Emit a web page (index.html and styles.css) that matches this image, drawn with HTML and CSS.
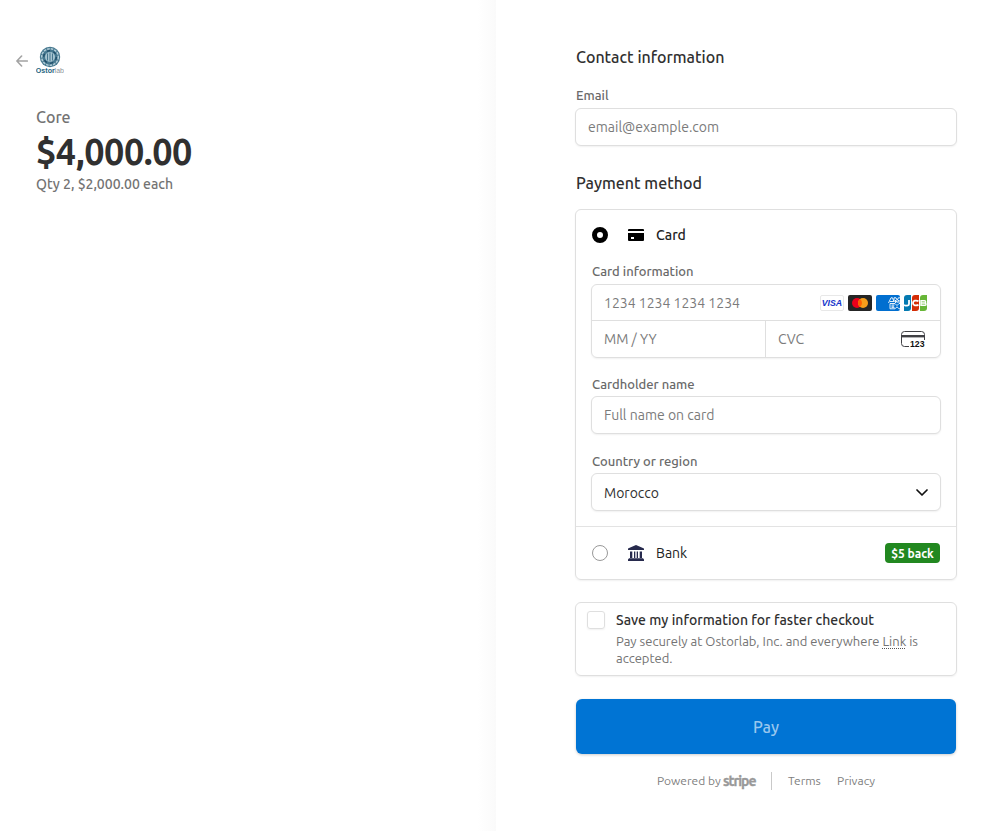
FILE: index.html
```html
<!DOCTYPE html>
<html lang="en">
<head>
<meta charset="utf-8">
<title>Checkout</title>
<link rel="stylesheet" href="styles.css">
</head>
<body>
<div class="page">
  <aside class="summary">
    <header class="brand">
      <svg class="back" width="12" height="12" viewBox="0 0 12 12" fill="none" stroke="#a3a3a3" stroke-width="1.6" stroke-linecap="round" stroke-linejoin="round"><path d="M5.6 1 .9 6l4.7 5M1 6h10.3"/></svg>
      <svg class="logo" width="28" height="28" viewBox="0 0 28 28">
        <circle cx="14" cy="11" r="10.2" fill="#46788f"/>
        <circle cx="14" cy="11" r="8.3" fill="none" stroke="#b3cdd8" stroke-width="1.5" stroke-dasharray="2.6 1"/>
        <circle cx="14" cy="11" r="6.3" fill="none" stroke="#1d4a66" stroke-width="1.3" stroke-dasharray="3 3.5"/>
        <circle cx="14" cy="11" r="5" fill="#a6c4d0"/>
        <path d="M11.500 7.500v7M14 6.500v9M16.500 7.500v7" stroke="#47778f" stroke-width="1"/>
        <text x="-.2" y="27" class="logo-name" textLength="19" lengthAdjust="spacingAndGlyphs">Ostor</text>
        <text x="18.6" y="27" class="logo-name logo-tail" textLength="9.4" lengthAdjust="spacingAndGlyphs">lab</text>
      </svg>
    </header>
    <div class="product">Core</div>
    <div class="amount">$4,000.00</div>
    <div class="quantity">Qty 2, $2,000.00 each</div>
  </aside>

  <main class="payment">
    <h2 class="heading heading-contact">Contact information</h2>
    <div class="label label-email">Email</div>
    <div class="field field-email">email@example.com</div>
    <h2 class="heading heading-method">Payment method</h2>

    <section class="methods">
      <div class="card-form">
        <div class="method">
          <span class="radio radio-on"></span>
          <svg class="method-icon" width="16" height="16" viewBox="0 0 16 16"><path d="M1 2h14a1 1 0 0 1 1 1v1H0V3a1 1 0 0 1 1-1zM0 6h16v7a1 1 0 0 1-1 1H1a1 1 0 0 1-1-1zm3 4v2h3v-2z" fill-rule="evenodd"/></svg>
          <span class="method-name name-card">Card</span>
        </div>
        <div class="label label-card">Card information</div>
        <div class="card-fields">
          <div class="card-number"><span class="digits">1234 1234 1234 1234</span>
            <span class="networks">
              <svg width="24" height="16" viewBox="0 0 24 16"><rect x=".5" y=".5" width="23" height="15" rx="1.5" fill="#fff" stroke="#e8e8e8"/><text x="1.7" y="11.2" class="visa" textLength="20.5" lengthAdjust="spacingAndGlyphs">VISA</text></svg>
              <svg width="24" height="16" viewBox="0 0 24 16"><rect width="24" height="16" rx="2" fill="#252525"/><circle cx="9" cy="8" r="5" fill="#eb001b"/><circle cx="15" cy="8" r="5" fill="#f79e1b"/><path d="M12 4a5 5 0 0 1 0 8 5 5 0 0 1 0-8z" fill="#ff5f00"/></svg>
              <svg width="24" height="16" viewBox="0 0 24 16"><rect width="24" height="16" rx="2" fill="#016fd0"/><g fill="none" stroke="#fff" stroke-width=".9"><path d="M12.5 8 15 2.800h1.500L18 7V2.800h2l1.200 2.500 1.200-2.500h1.600M14 6.500h3.500M19.500 8V5l1.700 2.500L23 5v3M14 8.500h5l2 2 2-2h1M14 8.500v5.300h5l2-2 2 2h1M15.500 10h3M15.500 11.200h2.500M15.500 12.400h3"/></g></svg>
              <svg width="24" height="16" viewBox="0 0 24 16"><path d="M3 0h4v13a3 3 0 0 1-3 3H0V3a3 3 0 0 1 3-3z" fill="#047ab1"/><path d="M11 0h4v13a3 3 0 0 1-3 3H8V3a3 3 0 0 1 3-3z" fill="#d42d06"/><path d="M19 0h4v13a3 3 0 0 1-3 3h-4V3a3 3 0 0 1 3-3z" fill="#67b637"/><g fill="none" stroke="#fff" stroke-width="1.8"><path d="M5 5v4c0 2-3 2-5 1.100M14.500 6.100c-2.500-1-5.500-.6-5.500 1.900s3 2.900 5.500 1.900"/><path d="M17 5.800h3.500c1.600 0 1.600 2.200 0 2.200H17h3.800c1.700 0 1.700 2.300 0 2.300H17z" stroke-width="1.4"/></g></svg>
            </span>
          </div>
          <div class="card-row">
            <div class="expiry">MM / YY</div>
            <div class="cvc"><span class="cvc-text">CVC</span>
              <svg class="cvc-icon" width="24" height="18" viewBox="0 0 24 18"><path d="M8 15.500H3.500a3 3 0 0 1-3-3v-9a3 3 0 0 1 3-3h17a3 3 0 0 1 3 3V9" fill="none" stroke="#404044"/><path d="M1 4h22v2.400H1z" fill="#404044"/><text x="9" y="16" class="cvc-digits" textLength="14.5" lengthAdjust="spacingAndGlyphs">123</text></svg>
            </div>
          </div>
        </div>
        <div class="label label-holder">Cardholder name</div>
        <div class="field field-holder">Full name on card</div>
        <div class="label label-country">Country or region</div>
        <div class="field field-country"><span class="country">Morocco</span>
          <svg class="chevron" width="12" height="12" viewBox="0 0 12 12" fill="none" stroke="#111" stroke-width="1.7" stroke-linecap="round" stroke-linejoin="round"><path d="m1 4 5 5 5-5"/></svg>
        </div>
      </div>
      <div class="method bank">
        <span class="radio"></span>
        <svg class="method-icon" width="16" height="16" viewBox="0 0 16 16" fill="#272a4d"><path d="M8 0l7.500 3.200a.8.8 0 0 1 .5.700V5H0V3.900c0-.3.200-.6.500-.7zM2 6.500h2.300V13H2zm4 0h1.300V13H6zm2.700 0H10V13H8.700zm3 0H14V13h-2.300zM1 13.200h14l1 1.300V16H0v-1.500z"/></svg>
        <span class="method-name name-bank">Bank</span>
        <span class="badge">$5 back</span>
      </div>
    </section>

    <section class="save">
      <span class="checkbox"></span>
      <div>
        <div class="save-title">Save my information for faster checkout</div>
        <div class="save-text"><div class="save-line">Pay securely at Ostorlab, Inc. and everywhere <span class="link">Link</span> is</div><div class="save-end">accepted.</div></div>
      </div>
    </section>

    <button class="pay">Pay</button>
    <footer class="footer">
      <span class="powered">Powered by</span><b class="stripe">stripe</b>
      <i class="rule"></i>
      <span class="terms">Terms</span><span class="privacy">Privacy</span>
    </footer>
  </main>
</div>
</body>
</html>
```
FILE: styles.css
```css
* { box-sizing: border-box; }
body {
  margin: 0;
  background: #fff;
  color: #303030;
  font-family: Ubuntu, "Noto Sans", "Open Sans", sans-serif;
  font-size: 14px;
  white-space: nowrap;
}
svg { display: block; flex: none; }
.page { display: flex; height: 831px; overflow: hidden; }

.summary {
  width: 496px;
  padding: 46px 0 0 36px;
  background: linear-gradient(to right, #fff 478px, #fafafa 496px);
}
.brand { display: flex; align-items: center; gap: 8px; height: 28px; margin-left: -20px; }
.back { margin-top: 2px; }
.logo-name { font: bold 7.5px "Liberation Sans", sans-serif; fill: #286580; }
.logo-tail { font-weight: 400; fill: #8c9499; }
.product { height: 22px; margin-top: 32px; font-size: 16px; font-weight: 500; line-height: 22px; color: #737373; }
.amount { height: 44px; margin-top: 2px; font-size: 36px; font-weight: 600; line-height: 44px; letter-spacing: -.43px; }
.quantity { height: 20px; font-weight: 500; line-height: 20px; color: #737373; }

.payment { width: 382px; margin-left: 79px; padding-top: 47px; }
.heading { height: 20px; margin: 0 0 0 1px; font-size: 16px; font-weight: 500; line-height: 20px; }
.heading-method { margin-top: 27px; }
.label { height: 16px; margin-left: 1px; font-size: 13px; font-weight: 500; line-height: 16px; color: #6a6a6a; }
.label-email { margin-top: 20px; }
.field {
  display: flex;
  align-items: center;
  height: 38px;
  padding: 0 12px;
  border: 1px solid #dfdfdf;
  border-radius: 6px;
  background: #fff;
  box-shadow: 0 1px 2px rgba(0, 0, 0, .06);
  color: #7b7b7b;
}
.field-email { margin-top: 5px; }

.methods {
  height: 371px;
  margin-top: 16px;
  border: 1px solid #dfdfdf;
  border-radius: 6px;
  box-shadow: 0 1px 2px rgba(0, 0, 0, .06);
}
.card-form { height: 317px; padding: 15px 15px 0; border-bottom: 1px solid #e3e3e3; }
.method { display: flex; align-items: center; height: 20px; padding-left: 1px; }
.radio { width: 16px; height: 16px; border: 1px solid #999; border-radius: 50%; }
.radio-on { border: 5px solid #000; }
.method-icon { margin: 0 12px 0 20px; }
.bank { height: 52px; padding: 0 16px; }
.badge {
  width: 55px;
  height: 20px;
  margin-left: auto;
  border-radius: 4px;
  background: #228820;
  color: #fff;
  font-size: 12px;
  font-weight: 600;
  line-height: 21px;
  text-align: center;
}
.label-card { margin-top: 18px; }
.card-fields {
  height: 74px;
  margin-top: 5px;
  border: 1px solid #dfdfdf;
  border-radius: 6px;
  box-shadow: 0 1px 2px rgba(0, 0, 0, .06);
  color: #7b7b7b;
}
.card-number { display: flex; align-items: center; justify-content: space-between; height: 36px; padding: 0 12px; border-bottom: 1px solid #dfdfdf; }
.networks { display: flex; gap: 4px; }
.visa { font: italic bold 9.5px "Liberation Sans", sans-serif; fill: #1434cb; }
.card-row { display: flex; height: 36px; }
.expiry { width: 173px; padding-left: 12px; line-height: 36px; }
.cvc { display: flex; flex: 1; align-items: center; justify-content: space-between; padding: 0 15px 0 12px; border-left: 1px solid #dfdfdf; }
.cvc-icon { margin-top: 2px; }
.cvc-digits { font: bold 8.5px "Liberation Sans", sans-serif; fill: #111; }
.label-holder { margin-top: 18px; }
.field-holder { margin-top: 4px; }
.label-country { margin-top: 19px; }
.field-country { justify-content: space-between; margin-top: 4px; color: #303030; }
.country { padding-top: 2px; }
.method-name { color: #222; }
.name-card { font-weight: 500; }

.save {
  display: flex;
  gap: 11px;
  height: 74px;
  margin-top: 22px;
  padding: 8px 11px;
  border: 1px solid #dfdfdf;
  border-radius: 6px;
  box-shadow: 0 1px 2px rgba(0, 0, 0, .06);
}
.checkbox { width: 18px; height: 18px; border: 1px solid #dfdfdf; border-radius: 3px; box-shadow: 0 1px 2px rgba(0, 0, 0, .06); }
.save-title { height: 18px; font-weight: 500; line-height: 18px; letter-spacing: .02px; }
.save-text { margin-top: 4px; font-size: 13px; line-height: 17px; color: #737373; }
.link { text-decoration: underline dotted #555 1px; text-underline-offset: 2px; }

.pay {
  display: block;
  width: 380px;
  height: 55px;
  margin: 23px 0 0 1px;
  padding: 0;
  border: 0;
  border-radius: 6px;
  background: #0074d4;
  box-shadow: 0 1px 3px rgba(0, 0, 0, .2);
  color: #99c7ee;
  font: 500 16px Ubuntu, "Noto Sans", sans-serif;
}
.footer { display: flex; align-items: center; height: 18px; margin: 18px 0 0 82px; font-size: 12px; line-height: 14px; color: #808080; }
.powered { width: 66px; }
.stripe { width: 33px; font-size: 14px; letter-spacing: -1.05px; color: #999; -webkit-text-stroke: .3px #999; }
.rule { width: 1px; height: 18px; margin: 0 16px 0 15px; background: #c9c9c9; }
.terms { width: 49px; }
```
